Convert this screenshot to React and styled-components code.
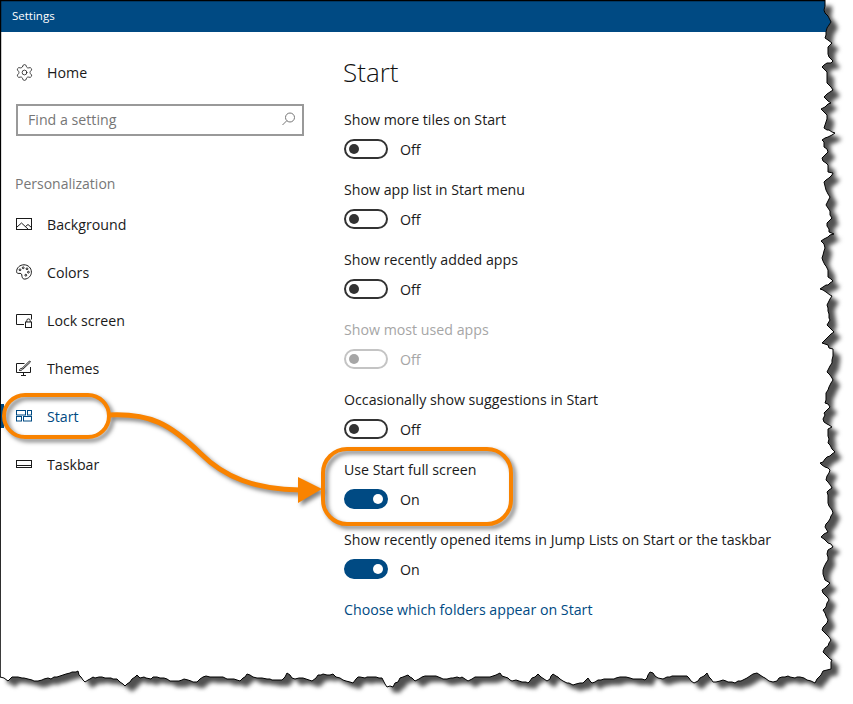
import React from "react";
import styled, { createGlobalStyle } from "styled-components";
import { Settings } from "lucide-react";

const Global = createGlobalStyle`
  html, body { margin: 0; padding: 0; background: #fff; }
  body { font-family: "Open Sans", "Noto Sans", "Liberation Sans", sans-serif; color: #111; }
`;

const BLUE = "#004a83";
const ORANGE = "#f98300";

const rightEdge = [[825,0],[824,10],[831,22],[826,32],[825,38],[832,43],[828,47],[829,57],[833,61],[822,67],[827,72],[827,83],[833,90],[824,97],[831,103],[821,109],[827,115],[824,128],[835,133],[822,140],[828,152],[822,158],[828,165],[828,172],[833,173],[824,182],[826,190],[830,197],[826,205],[832,218],[827,223],[829,232],[834,234],[821,241],[825,248],[822,258],[828,270],[828,277],[833,281],[820,289],[832,296],[827,305],[830,320],[827,325],[834,332],[822,343],[833,349],[832,363],[827,372],[833,380],[826,393],[825,403],[830,407],[824,413],[824,422],[832,427],[828,429],[828,443],[835,452],[820,463],[830,470],[826,480],[832,488],[827,492],[828,503],[833,513],[825,527],[828,532],[821,537],[833,547],[828,550],[828,560],[823,570],[825,580],[830,583],[822,590],[829,600],[823,610],[828,620],[822,630],[831,640],[823,652],[832,660],[831,669],[823,671]];
const bottomEdge = [[815,683],[807,680],[797,677],[782,677],[773,682],[765,678],[757,673],[747,678],[735,683],[723,680],[713,682],[707,673],[700,678],[694,683],[687,676],[680,676],[672,676],[663,679],[658,678],[650,672],[645,680],[633,679],[620,677],[610,679],[598,680],[592,683],[588,678],[583,683],[573,685],[563,681],[553,674],[547,681],[538,674],[528,683],[510,680],[500,673],[490,677],[475,677],[468,681],[462,677],[447,679],[433,676],[422,677],[415,681],[408,675],[400,678],[393,687],[387,687],[382,678],[358,677],[353,683],[343,680],[333,674],[318,675],[312,681],[303,678],[295,679],[287,673],[282,680],[253,677],[247,674],[240,681],[220,677],[203,677],[197,682],[188,680],[170,681],[160,678],[140,678],[137,675],[125,686],[117,679],[93,677],[85,682],[78,671],[72,672],[57,677],[38,681],[28,679],[12,677],[8,681],[0,677]];

// Break long segments into short, slightly wobbling ones so the edge reads as torn paper.
const roughen = (points) => {
  const out = [];
  let seed = 7;
  const wobble = () => {
    seed = (seed * 73 + 41) % 101;
    return (seed / 100 - 0.5) * 1.6;
  };
  points.forEach(([x, y], i) => {
    out.push([x, y]);
    const next = points[i + 1];
    if (!next) return;
    const steps = Math.floor(Math.hypot(next[0] - x, next[1] - y) / 3);
    for (let s = 1; s < steps; s++) {
      const t = s / steps;
      out.push([
        Math.round(x + (next[0] - x) * t + wobble()),
        Math.round(y + (next[1] - y) * t + wobble()),
      ]);
    }
  });
  return out;
};

const tornPoints = roughen([...rightEdge, ...bottomEdge]);
const tornLine = tornPoints.map((p) => p.join(",")).join(" ");
const tornClip = ["0px 0px", ...tornPoints.map(([x, y]) => `${x}px ${y}px`)].join(", ");

const Stage = styled.div`
  position: relative;
  width: 853px;
  height: 704px;
  overflow: hidden;
  background: #fff;
`;
const PaperShadow = styled.svg`
  position: absolute;
  inset: 0;
  filter: blur(2.2px);
`;
const Overlay = styled.svg`
  position: absolute;
  inset: 0;
  pointer-events: none;
`;
const Callouts = styled.g`
  filter: drop-shadow(3px 3px 2px rgba(0, 0, 0, 0.5));
`;
const Window = styled.div`
  position: relative;
  width: 853px;
  height: 704px;
  background: #fff;
  clip-path: polygon(${tornClip}, 0px 704px);
  display: flex;
  flex-direction: column;
`;
const TitleBar = styled.div`
  height: 32px;
  flex: none;
  background: ${BLUE};
  color: #fff;
  font-size: 11.5px;
  line-height: 32px;
  padding-left: 12px;
`;
const Body = styled.div`
  display: grid;
  grid-template-columns: 344px 1fr;
  flex: 1;
`;
const Sidebar = styled.nav`
  padding-top: 16px;
  display: flex;
  flex-direction: column;
`;
const NavItem = styled.div`
  position: relative;
  height: 48px;
  display: flex;
  align-items: center;
  gap: 15px;
  padding-left: 16px;
  font-size: 14.2px;
  color: ${(p) => (p.$active ? BLUE : "#1a1a1a")};
  ${(p) =>
    p.$active &&
    `&::before { content: ""; position: absolute; left: 0; top: 12px; width: 4px; height: 24px; background: ${BLUE}; }`}
`;
const IconBox = styled.svg`
  width: 16px;
  height: 16px;
  flex: none;
  overflow: visible;
  fill: none;
  stroke: ${(p) => p.$color || "#1a1a1a"};
  stroke-width: 1;
`;
const GearIcon = styled(Settings)`
  width: 19px;
  height: 19px;
  margin: 0 -1.5px;
  flex: none;
  stroke: #1a1a1a;
  stroke-width: 1;
`;
const SearchBox = styled.div`
  margin: 8px 0 0 16px;
  width: 288px;
  height: 32px;
  box-sizing: border-box;
  border: 2px solid #999;
  display: flex;
  align-items: center;
  justify-content: space-between;
  padding: 0 6px 2px 10px;
  font-size: 14.2px;
  color: #767676;
`;
const SectionLabel = styled.div`
  margin: 32px 0 0 15px;
  height: 32px;
  line-height: 32px;
  font-size: 14px;
  color: #777;
`;
const Main = styled.main`
  padding-top: 16px;
  display: flex;
  flex-direction: column;
`;
const Title = styled.h1`
  margin: 0 0 11px -1px;
  height: 48px;
  line-height: 48px;
  font-size: 26px;
  font-weight: 300;
  color: #111;
`;
const Group = styled.div`
  height: 70px;
`;
const Label = styled.div`
  height: 24px;
  line-height: 26px;
  font-size: 14.2px;
  color: ${(p) => (p.$disabled ? "#a6a6a6" : "#1a1a1a")};
`;
const ToggleRow = styled.div`
  margin-top: 8px;
  display: flex;
  align-items: center;
  gap: 12px;
  height: 20px;
  font-size: 14.2px;
  color: ${(p) => (p.$disabled ? "#a6a6a6" : "#1a1a1a")};
`;
const Track = styled.span`
  width: 44px;
  height: 20px;
  box-sizing: border-box;
  border-radius: 10px;
  border: 2px solid ${(p) => (p.$on ? BLUE : p.$disabled ? "#c4c4c4" : "#333")};
  background: ${(p) => (p.$on ? BLUE : "transparent")};
  display: flex;
  align-items: center;
  justify-content: ${(p) => (p.$on ? "flex-end" : "flex-start")};
  padding: 0 3px;
`;
const Thumb = styled.span`
  width: 10px;
  height: 10px;
  border-radius: 50%;
  background: ${(p) => (p.$on ? "#fff" : p.$disabled ? "#a6a6a6" : "#333")};
`;
const LinkText = styled.a`
  height: 24px;
  line-height: 26px;
  font-size: 14.2px;
  color: ${BLUE};
`;

const SearchGlyph = () => (
  <IconBox viewBox="0 0 16 16" $color="#777">
    <circle cx="10" cy="6.5" r="4.5" />
    <path d="M6.8 9.7L2.5 14" />
  </IconBox>
);
const Picture = () => (
  <IconBox viewBox="0 0 16 16">
    <rect x="0.5" y="2.5" width="15" height="11" />
    <path d="M1 11l4.5-4 7 6.5M9.5 10.5l2.5-2 3.5 3" />
  </IconBox>
);
const Palette = () => (
  <IconBox viewBox="0 0 16 16">
    <path d="M8 .8C3.8.8.6 3.8.6 7.6c0 1.5 1.2 2 2.4 1.8 1.4-.2 2.8.2 2.8 1.6 0 1 .2 1.6.4 2.2.4 1.4 1.4 2 2.6 1.9 3.8-.4 6.6-3.4 6.6-6.9C15.4 4 12.2.8 8 .8z" />
    <circle cx="4" cy="5.8" r=".9" />
    <circle cx="7.2" cy="3.8" r=".9" />
    <circle cx="11" cy="4.8" r=".9" />
    <circle cx="12.4" cy="8.2" r=".9" />
    <circle cx="9.8" cy="11.2" r=".9" />
  </IconBox>
);
const LockScreen = () => (
  <IconBox viewBox="0 0 16 16">
    <path d="M8 12.5H.5v-10h15v5" />
    <rect x="9.5" y="10" width="6" height="5.5" />
    <path d="M10.8 10V8.6a1.7 1.7 0 0 1 3.4 0V10" />
  </IconBox>
);
const Themes = () => (
  <IconBox viewBox="0 0 16 16">
    <path d="M8.5 3.5H.5v9h14V7M5 15.5h5M7.5 12.5v3" />
    <path d="M3.5 10.5c.3-2 1.3-2.2 2.4-2.1.5.6.4 1.4-.2 1.8-.6.4-1.4.4-2.2.3zM6 8.4l7.5-7.4 1 1-7.6 7.2" />
  </IconBox>
);
const Tiles = ({ color }) => (
  <IconBox viewBox="0 0 16 16" $color={color}>
    <rect x="0.5" y="2.5" width="9" height="4.5" />
    <rect x="11.5" y="2.5" width="4" height="4.5" />
    <rect x="0.5" y="8.5" width="5" height="4.5" />
    <rect x="7.5" y="8.5" width="8" height="4.5" />
  </IconBox>
);
const Taskbar = () => (
  <IconBox viewBox="0 0 16 16">
    <rect x="0.5" y="4.5" width="15" height="7" />
    <path d="M1 9.5h14" />
  </IconBox>
);

const nav = [
  { name: "Background", Icon: Picture },
  { name: "Colors", Icon: Palette },
  { name: "Lock screen", Icon: LockScreen },
  { name: "Themes", Icon: Themes },
  { name: "Start", Icon: Tiles, active: true },
  { name: "Taskbar", Icon: Taskbar },
];

const settings = [
  { label: "Show more tiles on Start" },
  { label: "Show app list in Start menu" },
  { label: "Show recently added apps" },
  { label: "Show most used apps", disabled: true },
  { label: "Occasionally show suggestions in Start" },
  { label: "Use Start full screen", on: true },
  { label: "Show recently opened items in Jump Lists on Start or the taskbar", on: true },
];

export default function App() {
  return (
    <Stage>
      <Global />
      <PaperShadow width="853" height="704">
        <polygon points={`0,0 ${tornLine}`} fill="#505050" transform="translate(7 6)" />
      </PaperShadow>
      <Window>
        <TitleBar>Settings</TitleBar>
        <Body>
          <Sidebar>
            <NavItem>
              <GearIcon />
              Home
            </NavItem>
            <SearchBox>
              Find a setting
              <SearchGlyph />
            </SearchBox>
            <SectionLabel>Personalization</SectionLabel>
            {nav.map(({ name, Icon, active }) => (
              <NavItem key={name} $active={active}>
                <Icon color={active ? BLUE : undefined} />
                {name}
              </NavItem>
            ))}
          </Sidebar>
          <Main>
            <Title>Start</Title>
            {settings.map((s) => (
              <Group key={s.label}>
                <Label $disabled={s.disabled}>{s.label}</Label>
                <ToggleRow $disabled={s.disabled}>
                  <Track $on={s.on} $disabled={s.disabled}>
                    <Thumb $on={s.on} $disabled={s.disabled} />
                  </Track>
                  {s.on ? "On" : "Off"}
                </ToggleRow>
              </Group>
            ))}
            <LinkText>Choose which folders appear on Start</LinkText>
          </Main>
        </Body>
      </Window>
      <Overlay width="853" height="704">
        <polyline points={`0,677 0.5,0.5 825,0.5`} fill="none" stroke="#000" strokeWidth="1.5" />
        <polyline points={tornLine} fill="none" stroke="#000" strokeWidth="1" />
        <Callouts>
          <rect x="4" y="395" width="105" height="42" rx="21" fill="none" stroke={ORANGE} strokeWidth="4" />
          <rect x="323" y="449" width="188" height="75" rx="24" fill="none" stroke={ORANGE} strokeWidth="4" />
          <path d="M109 415 C 150 413, 170 424, 200 453 C 225 478, 255 489, 300 490" fill="none" stroke={ORANGE} strokeWidth="5" />
          <polygon points="298,477 322,489 298,503" fill={ORANGE} />
        </Callouts>
      </Overlay>
    </Stage>
  );
}
